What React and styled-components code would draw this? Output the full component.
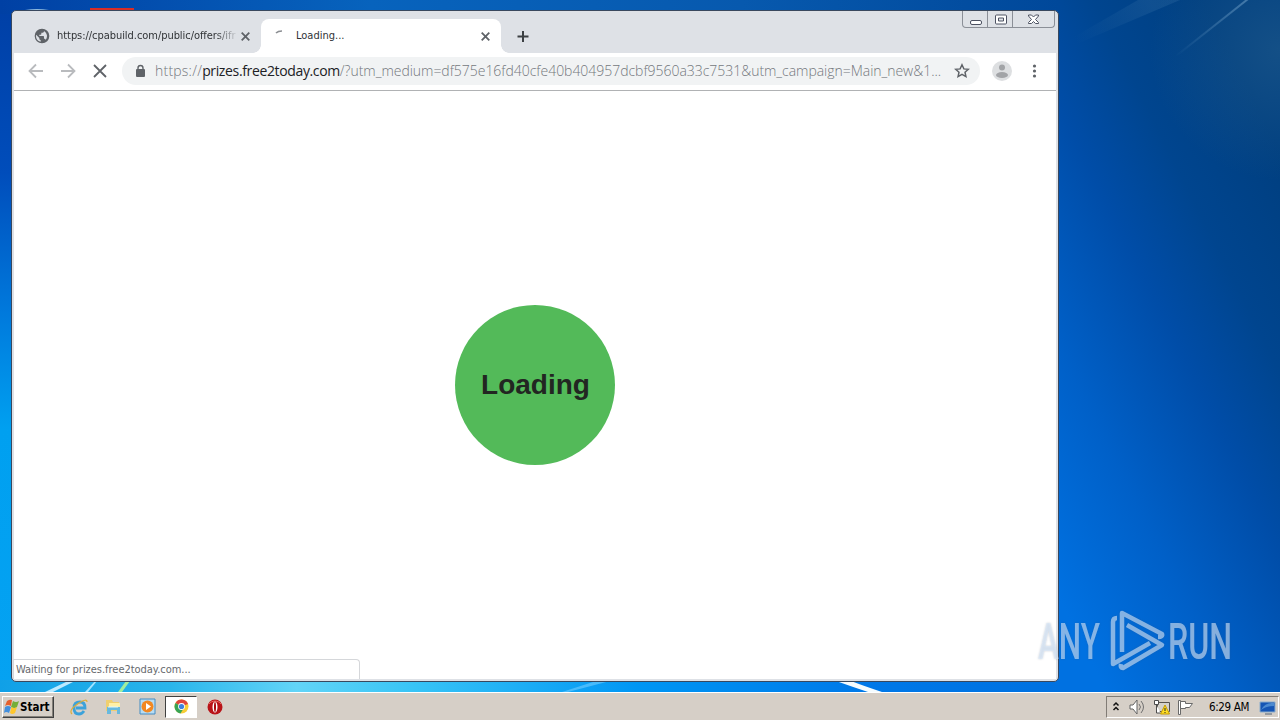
import React from 'react';
import styled, { createGlobalStyle, css } from 'styled-components';

const GlobalStyle = createGlobalStyle`
    * { box-sizing: border-box; }
    body {
        margin: 0;
        overflow: hidden;
    }
    svg { flex: none; }
`;

const ui = css`
    font-family: "DejaVu Sans Condensed", "DejaVu Sans", sans-serif;
    font-stretch: condensed;
    white-space: nowrap;
`;

const Desktop = styled.div`
    position: relative;
    display: flex;
    flex-direction: column;
    width: 1280px;
    height: 720px;
    overflow: hidden;
    background: #0058bd;
`;

const Wallpaper = styled.svg`
    position: absolute;
    inset: 0;
`;

const Workspace = styled.main`
    position: relative;
    height: 692px;
    padding: 10px 0 0 11px;
`;

const BrowserWindow = styled.section`
    display: flex;
    flex-direction: column;
    width: 1048px;
    height: 672px;
    padding: 0 2px 2px;
    border: 1px solid #39485e;
    border-radius: 5px;
    background: #dee1e6;
    overflow: hidden;
`;

const TabStrip = styled.header`
    display: flex;
    height: 42px;
    padding-left: 10px;
    flex: none;
`;

const Tab = styled.div`
    position: relative;
    display: flex;
    align-items: center;
    width: ${props => props.active ? '240px' : '237px'};
    height: 34px;
    margin-top: 8px;
    padding: 0 11px 0 ${props => props.active ? '12px' : '10px'};
    border-radius: 8px 8px 0 0;
    background: ${props => props.active ? '#ffffff' : 'transparent'};
    ${props => props.active && css`
        &::before, &::after {
            content: '';
            position: absolute;
            bottom: 0;
            width: 8px;
            height: 8px;
        }
        &::before {
            left: -8px;
            background: radial-gradient(circle at 0 0, transparent 7.5px, #ffffff 8px);
        }
        &::after {
            right: -8px;
            background: radial-gradient(circle at 100% 0, transparent 7.5px, #ffffff 8px);
        }
    `}
`;

const TabTitle = styled.span`
    ${ui}
    flex: 1;
    margin-left: ${props => props.gap};
    overflow: hidden;
    font-size: 11px;
    line-height: 16px;
    letter-spacing: ${props => props.spacing || '0'};
    color: #303336;
    ${props => props.fade && 'margin-right: 4px; mask-image: linear-gradient(90deg, #000 88%, transparent 101%);'}
`;

const NewTab = styled.div`
    display: flex;
    align-items: center;
    margin: 8px 0 0 15px;
`;

const Caption = styled.div`
    display: flex;
    width: 93px;
    height: 17px;
    margin: 0 1px 0 auto;
    border: 1px solid #8b8f97;
    border-top: 0;
    border-radius: 0 0 4px 4px;
`;

const CaptionButton = styled.div`
    display: flex;
    align-items: center;
    justify-content: center;
    width: ${props => props.wide ? '42px' : props.first ? '24px' : '25px'};
    border-left: ${props => props.first ? '0' : '1px solid #8b8f97'};
`;

const Toolbar = styled.div`
    display: flex;
    align-items: center;
    flex: none;
    height: 38px;
    padding: 0 13px 1px 14px;
    border-bottom: 1px solid #b0b2b4;
    background: #ffffff;
`;

const NavButton = styled.div`
    display: flex;
    width: 32px;
    flex: none;
`;

const AddressBar = styled.div`
    display: flex;
    align-items: center;
    width: 858px;
    height: 28px;
    margin-left: -2px;
    padding: 0 10px 0 12px;
    border-radius: 14px;
    background: #f1f3f4;
`;

const Url = styled.span`
    flex: 1;
    margin-left: 9px;
    overflow: hidden;
    font-family: "Open Sans", "Noto Sans", sans-serif;
    font-weight: 300;
    font-size: 14px;
    line-height: 20px;
    letter-spacing: -0.03px;
    white-space: nowrap;
    color: #74787d;
`;

const Scheme = styled.span`
    letter-spacing: 0.22px;
`;

const Domain = styled.span`
    font-weight: 400;
    letter-spacing: -0.36px;
    color: #202124;
`;

const Profile = styled.div`
    display: flex;
    margin: 0 16px 0 12px;
`;

const Page = styled.div`
    position: relative;
    display: flex;
    flex: 1;
    align-items: center;
    justify-content: center;
    background: #ffffff;
`;

const Loader = styled.div`
    display: flex;
    align-items: center;
    justify-content: center;
    width: 160px;
    height: 160px;
    padding-left: 1px;
    border-radius: 50%;
    background: #53ba59;
    font: bold 28px/32px "Liberation Sans", Arial, sans-serif;
    color: #222622;
`;

const StatusBubble = styled.div`
    ${ui}
    position: absolute;
    left: -1px;
    bottom: 0;
    width: 347px;
    height: 20px;
    padding-left: 2px;
    border: 1px solid #d5d7da;
    border-bottom: 0;
    border-top-right-radius: 4px;
    font-size: 11px;
    line-height: 19px;
    letter-spacing: -0.03px;
    color: #66696d;
    background: #ffffff;
`;

const Watermark = styled.div`
    position: absolute;
    left: 1034px;
    top: 606px;
    display: flex;
    filter: drop-shadow(0 0 1px rgba(60, 80, 110, 0.4));
`;

const WatermarkText = styled.text`
    font-family: Roboto, sans-serif;
    font-size: 50px;
    font-weight: 500;
    fill: #d7e7fa;
    fill-opacity: 0.6;
`;

const Taskbar = styled.footer`
    position: relative;
    display: flex;
    align-items: center;
    height: 28px;
    padding: 2px 1px 2px 2px;
    border-top: 1px solid #ffffff;
    background: #d6cfc7;
`;

const StartButton = styled.div`
    ${ui}
    display: flex;
    align-items: center;
    width: 52px;
    height: 22px;
    padding-left: 1px;
    border: 1px solid;
    border-color: #ffffff #404040 #404040 #ffffff;
    box-shadow: inset -1px -1px #848079;
    font-size: 11.5px;
    font-weight: bold;
    color: #000000;
`;

const QuickLaunch = styled.div`
    display: flex;
    align-items: center;
    margin-left: 8px;
`;

const TaskIcon = styled.div`
    display: flex;
    align-items: center;
    justify-content: center;
    width: ${props => props.active ? '32px' : '34px'};
    height: 22px;
    margin: ${props => props.active ? '0 1px' : '0'};
    ${props => props.active && css`
        border: 1px solid;
        border-color: #404040 #ffffff #ffffff #404040;
        background: #ffffff;
    `}
`;

const Tray = styled.div`
    ${ui}
    display: flex;
    align-items: center;
    width: 173px;
    height: 22px;
    margin-left: auto;
    padding-left: 5px;
    border: 1px solid;
    border-color: #817c76 #ffffff #ffffff #817c76;
    font-size: 11.5px;
    letter-spacing: -0.35px;
    color: #000000;
`;

const Clock = styled.span`
    width: 42px;
    margin: 0 8px 0 15px;
`;

const Background = () => (
    <Wallpaper width="1280" height="692">
        <defs>
            <linearGradient id="right" x1="1060" y1="600" x2="1416" y2="422" gradientUnits="userSpaceOnUse">
                <stop offset="0" stopColor="#0071e1" />
                <stop offset=".28" stopColor="#0060c8" />
                <stop offset=".55" stopColor="#004da8" />
                <stop offset=".75" stopColor="#00458f" />
                <stop offset="1" stopColor="#003f80" />
            </linearGradient>
            <linearGradient id="left" x2="0" y2="1">
                <stop offset="0" stopColor="#003fa5" />
                <stop offset=".25" stopColor="#004dbb" />
                <stop offset=".45" stopColor="#0079dc" />
                <stop offset=".62" stopColor="#00a0f0" />
                <stop offset="1" stopColor="#05a2f2" />
            </linearGradient>
            <linearGradient id="top">
                <stop offset="0" stopColor="#0040a4" />
                <stop offset=".35" stopColor="#0763bd" />
                <stop offset=".7" stopColor="#0759ae" />
                <stop offset="1" stopColor="#00489a" />
            </linearGradient>
            <linearGradient id="bottom">
                <stop offset="0" stopColor="#10a0e7" />
                <stop offset=".16" stopColor="#2ab5eb" />
                <stop offset=".28" stopColor="#62d4f7" />
                <stop offset=".39" stopColor="#38c4f6" />
                <stop offset=".6" stopColor="#0096f4" />
                <stop offset=".82" stopColor="#0078e8" />
                <stop offset="1" stopColor="#0071e1" />
            </linearGradient>
            <radialGradient id="corner" cx="1280" cy="50" r="130" gradientUnits="userSpaceOnUse">
                <stop offset="0" stopColor="#316890" stopOpacity=".4" />
                <stop offset="1" stopColor="#316890" stopOpacity="0" />
            </radialGradient>
            <linearGradient id="ray" x1="1250" y1="0" x2="1175" y2="56" gradientUnits="userSpaceOnUse">
                <stop offset="0" stopColor="#9bc5e4" stopOpacity=".4" />
                <stop offset="1" stopColor="#9bc5e4" stopOpacity="0" />
            </linearGradient>
            <linearGradient id="haze" x1="1150" y1="0" x2="1075" y2="40" gradientUnits="userSpaceOnUse">
                <stop offset="0" stopColor="#4f86b5" stopOpacity=".2" />
                <stop offset="1" stopColor="#4f86b5" stopOpacity="0" />
            </linearGradient>
        </defs>
        <path d="M1055 0h225v692h-225z" fill="url(#right)" />
        <path d="M0 0h15v692H0z" fill="url(#left)" />
        <path d="M0 0h1060v14H0z" fill="url(#top)" />
        <path d="M0 680h1060v12H0z" fill="url(#bottom)" />
        <path d="M1130 0h150v200h-150z" fill="url(#corner)" />
        <path d="M1248-1l-72 57" stroke="url(#ray)" strokeWidth="2" />
        <path d="M1072 38l66-38h42l-108 46z" fill="url(#haze)" />
        <path d="M90 8h44v4H90z" fill="#d92d27" />
        <path d="M25 10q12-2 24 0z" fill="#8eb9de" />
        <path d="M45 692l23-11h7l-22 11z" fill="#bceaff" />
        <path d="M85 692l10-11h2l-9 11z" fill="#a3e3ff" />
        <path d="M118 692l8-11h4l-8 11z" fill="#a1ed9f" />
        <path d="M562 692l34-11h14l-42 11z" fill="#69caff" opacity=".65" />
        <path d="M836 681h15q13 5 31 11h-14q-15-5-32-11z" fill="#f5fcff" />
    </Wallpaper>
);

const Cross = () => (
    <svg width="9" height="9" viewBox="0 0 9 9">
        <path d="M.7.700l7.600 7.600M8.300.700L.700 8.300" stroke="#5f6368" strokeWidth="1.800" />
    </svg>
);

const Logo = () => (
    <svg width="206" height="70" viewBox="-4 -4 206 70" fill="none">
        <WatermarkText x="0" y="49" textLength="62" lengthAdjust="spacingAndGlyphs">ANY</WatermarkText>
        <WatermarkText x="130" y="49" textLength="64" lengthAdjust="spacingAndGlyphs">RUN</WatermarkText>
        <g stroke="#d7e7fa" strokeOpacity=".6" strokeWidth="4.500" strokeLinejoin="round">
            <path d="M79 8q-4 0-4 4v42l37-21" />
            <path d="M84 42V3l40 21q1 3-4 3" />
            <path d="M89 15l35 20-39 23q-3 0-2-4" />
        </g>
    </svg>
);

function App() {
    return (
        <Desktop>
            <GlobalStyle />
            <Background />
            <Workspace>
                <BrowserWindow>
                    <TabStrip>
                        <Tab>
                            <svg width="16" height="16" viewBox="0 0 24 24">
                                <path fill="#5f6368" d="M12 1a11 11 0 1 0 0 22 11 11 0 0 0 0-22zm-2 19.700A9 9 0 0 1 3 12l.2-1.800L8 15v1a2 2 0 0 0 2 2zm7.400-2.800A2 2 0 0 0 15.500 16H15v-3a1 1 0 0 0-1-1H8v-2h2a1 1 0 0 0 1-1V7h2a2 2 0 0 0 2-2v-.6a9 9 0 0 1 2.400 13.500z" />
                            </svg>
                            <TabTitle gap="7px" spacing="-0.05px" fade>https://cpabuild.com/public/offers/ifr</TabTitle>
                            <Cross />
                        </Tab>
                        <Tab active>
                            <svg width="15" height="15" viewBox="0 0 15 15">
                                <path d="M3 4q2-2 6-2" fill="none" stroke="#8c8f93" strokeWidth="1.600" />
                            </svg>
                            <TabTitle gap="8px">Loading...</TabTitle>
                            <Cross />
                        </Tab>
                        <NewTab><svg width="14" height="13"><path d="M7 1v11M1.500 6.500h11" stroke="#3c4043" strokeWidth="2" /></svg></NewTab>
                        <Caption>
                            <CaptionButton first>
                                <svg width="13" height="13"><rect x="1.500" y="7.500" width="11" height="4" rx="1.500" fill="#fff" stroke="#4d5262" /></svg>
                            </CaptionButton>
                            <CaptionButton>
                                <svg width="13" height="11"><rect x="1.500" y="1" width="11" height="9" rx="1" fill="#fff" stroke="#4d5262" /><path d="M4.500 4h5v3h-5z" fill="#dee1e6" stroke="#4d5262" /></svg>
                            </CaptionButton>
                            <CaptionButton wide>
                                <svg width="13" height="11"><path d="M1.500 1h3L6.500 3l2-2h3v1L8.500 5.500l3 3v1h-3l-2-2-2 2h-3v-1l3-3L1.500 2z" fill="#fff" stroke="#4d5262" /></svg>
                            </CaptionButton>
                        </Caption>
                    </TabStrip>
                    <Toolbar>
                        <NavButton><svg width="16" height="16" fill="none" stroke="#b9bbbe" strokeWidth="1.800"><path d="M15 8H2M8 1.500L1.500 8 8 14.500" /></svg></NavButton>
                        <NavButton><svg width="16" height="16" fill="none" stroke="#b9bbbe" strokeWidth="1.800"><path d="M1 8h13M8 1.500L14.500 8 8 14.500" /></svg></NavButton>
                        <NavButton><svg width="16" height="16" stroke="#5f6368" strokeWidth="1.800"><path d="M2 2l12 12M14 2L2 14" /></svg></NavButton>
                        <AddressBar>
                            <svg width="12" height="14"><path d="M4 6V4a2.500 2.500 0 0 1 5 0v2" fill="none" stroke="#5f6368" strokeWidth="1.400" /><rect x="2" y="5" width="9" height="8" rx="1" fill="#5f6368" /></svg>
                            <Url><Scheme>https://</Scheme><Domain>prizes.free2today.com</Domain>/?utm_medium=df575e16fd40cfe40b404957dcbf9560a33c7531&amp;utm_campaign=Main_new&amp;1...</Url>
                            <svg width="16" height="16" viewBox="0 0 24 24"><path d="M12 2.700l2.800 6.100 6.700.7-5 4.400 1.400 6.600-5.900-3.400-5.900 3.400 1.400-6.600-5-4.400 6.700-.7z" fill="none" stroke="#5f6368" strokeWidth="2.200" /></svg>
                        </AddressBar>
                        <Profile><svg width="20" height="20"><circle cx="10" cy="10" r="10" fill="#dddfe1" /><circle cx="10" cy="6.500" r="3" fill="#a2a4a7" /><ellipse cx="10" cy="14" rx="6" ry="3" fill="#a2a4a7" /></svg></Profile>
                        <svg width="12" height="16" fill="#5f6368"><circle cx="6.500" cy="3" r="1.600" /><circle cx="6.500" cy="8" r="1.600" /><circle cx="6.500" cy="13" r="1.600" /></svg>
                    </Toolbar>
                    <Page>
                        <Loader>Loading</Loader>
                        <StatusBubble>Waiting for prizes.free2today.com...</StatusBubble>
                    </Page>
                </BrowserWindow>
                <Watermark><Logo /></Watermark>
            </Workspace>
            <Taskbar>
                <StartButton>
                    <svg width="16" height="16">
                        <path d="M3 2q3-2 5-1L7 7Q4 5 1 7z" fill="#e5602d" /><path d="M9 2q3 2 6 0l-2 6q-3 2-6 0z" fill="#75ae38" />
                        <path d="M1 8q3-2 6 0l-2 6q-3-2-5 0z" fill="#438fdd" /><path d="M7.500 8q3 2 5.500 0l-2 6q-3 2-5 0z" fill="#ffc72d" />
                    </svg>
                    Start
                </StartButton>
                <QuickLaunch>
                    <TaskIcon><svg width="18" height="18"><path d="M14 13q-2 3-5 3-5 0-5-6t6-6q5 0 5 6H6" fill="none" stroke="#3ca2da" strokeWidth="2.800" /><path d="M2 16Q-2 12 9 5q8-5 8-1" fill="none" stroke="#dfad37" strokeWidth="1.200" /></svg></TaskIcon>
                    <TaskIcon><svg width="17" height="17"><path d="M1 2h6l1 2h6v9H1z" fill="#efcf70" /><path d="M4 5h11v5H4z" fill="#fff0a7" /><path d="M2 9h13v7h-3v-4H6v4H2z" fill="#68b9de" /><path d="M3 9h10" stroke="#dff8fe" /></svg></TaskIcon>
                    <TaskIcon><svg width="17" height="17"><path d="M1 1h15v15H1z" fill="#b7dcf3" stroke="#448cc2" /><circle cx="8.500" cy="8.500" r="6" fill="#f28822" /><path d="M7 5l5 3.500L7 12z" fill="#fff" /></svg></TaskIcon>
                    <TaskIcon active><svg width="15" height="15"><circle cx="7.500" cy="7.500" r="7" fill="#f7cd36" /><path d="M7.500 7.500L1.500 4a7 7 0 0 1 12.500 1z" fill="#df453b" /><path d="M7.500 7.500L1.500 4a7 7 0 0 0 5 10.500l3-5z" fill="#38a456" /><circle cx="7.500" cy="7.500" r="3.400" fill="#fff" /><circle cx="7.500" cy="7.500" r="2.600" fill="#3d81dd" /></svg></TaskIcon>
                    <TaskIcon><svg width="16" height="16"><circle cx="8" cy="8" r="7.500" fill="#b91318" /><path d="M2 5a7 6 0 0 1 12 0" stroke="#ed6860" fill="none" /><ellipse cx="8" cy="8" rx="2.500" ry="5.500" fill="#fff" /><ellipse cx="8" cy="8" rx="1" ry="5" fill="#a9070b" /></svg></TaskIcon>
                </QuickLaunch>
                <Tray>
                    <svg width="8" height="14" fill="none" stroke="#111" strokeWidth="1.500"><path d="M1.500 5.500L4 3l2.500 2.500M1.500 10L4 7.500 6.500 10" /></svg>
                    <svg width="74" height="20">
                        <path d="M10 8h3l4-5v14l-4-5h-3z" fill="#fff" stroke="#646464" /><path d="M19 7q3 3 0 6M21 4q5 6 0 12" fill="none" stroke="#707070" />
                        <path d="M37.500 5.500h12v9h-12z" fill="#d5d2cb" stroke="#57534e" /><path d="M34.500 3.500h4v4h-4zM36.500 8v8h4" fill="#fff" stroke="#4c4c4c" /><path d="M45 8l4.500 9h-9z" fill="#ffdf25" stroke="#c59a00" /><path d="M45 11v3m0 1v1" stroke="#222" />
                        <path d="M58.500 3.500h2v14h-2z" fill="#fff" stroke="#696969" /><path d="M60.500 4.500h5v2h7l-3 4h-4v1h-5z" fill="#fff" stroke="#696969" />
                    </svg>
                    <Clock>6:29 AM</Clock>
                    <svg width="17" height="18"><path d="M1 4h15v10H1z" fill="#1555b4" stroke="#8badcc" /><path d="M2 12q4-8 13-7v3Q7 8 2 12z" fill="#4c8ad0" /><path d="M6 16h7" stroke="#526578" /></svg>
                </Tray>
            </Taskbar>
        </Desktop>
    );
}

export default App;
